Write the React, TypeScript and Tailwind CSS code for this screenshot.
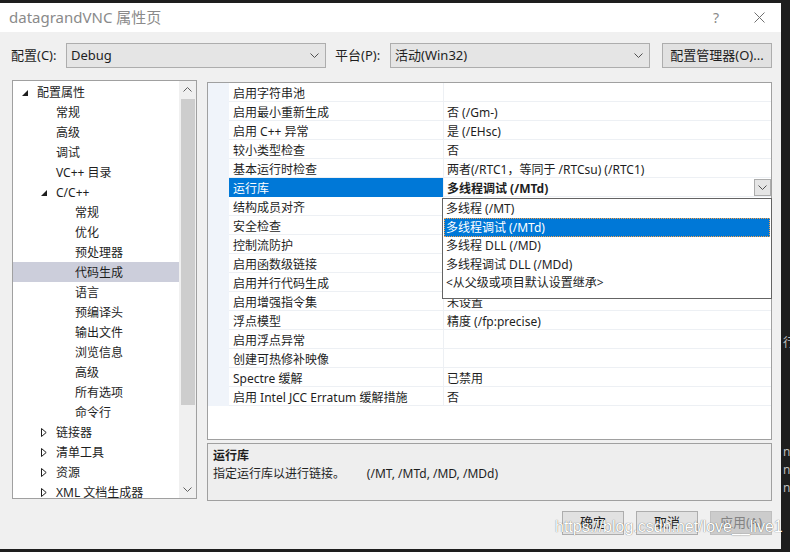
import React from 'react';

type TreeItem = { label: string; level: number; arrow?: 'open' | 'closed'; selected?: boolean };

const tree: TreeItem[] = [
  { label: '配置属性', level: 0, arrow: 'open' },
  { label: '常规', level: 1 },
  { label: '高级', level: 1 },
  { label: '调试', level: 1 },
  { label: 'VC++ 目录', level: 1 },
  { label: 'C/C++', level: 1, arrow: 'open' },
  { label: '常规', level: 2 },
  { label: '优化', level: 2 },
  { label: '预处理器', level: 2 },
  { label: '代码生成', level: 2, selected: true },
  { label: '语言', level: 2 },
  { label: '预编译头', level: 2 },
  { label: '输出文件', level: 2 },
  { label: '浏览信息', level: 2 },
  { label: '高级', level: 2 },
  { label: '所有选项', level: 2 },
  { label: '命令行', level: 2 },
  { label: '链接器', level: 1, arrow: 'closed' },
  { label: '清单工具', level: 1, arrow: 'closed' },
  { label: '资源', level: 1, arrow: 'closed' },
  { label: 'XML 文档生成器', level: 1, arrow: 'closed' },
];

const indent = ['w-[8px]', 'w-[27px]', 'w-[46px]'];

const props: [string, string][] = [
  ['启用字符串池', ''],
  ['启用最小重新生成', '否 (/Gm-)'],
  ['启用 C++ 异常', '是 (/EHsc)'],
  ['较小类型检查', '否'],
  ['基本运行时检查', '两者(/RTC1，等同于 /RTCsu) (/RTC1)'],
  ['运行库', '多线程调试 (/MTd)'],
  ['结构成员对齐', '默认设置'],
  ['安全检查', '启用安全检查 (/GS)'],
  ['控制流防护', ''],
  ['启用函数级链接', ''],
  ['启用并行代码生成', ''],
  ['启用增强指令集', '未设置'],
  ['浮点模型', '精度 (/fp:precise)'],
  ['启用浮点异常', ''],
  ['创建可热修补映像', ''],
  ['Spectre 缓解', '已禁用'],
  ['启用 Intel JCC Erratum 缓解措施', '否'],
];

const options = [
  { label: '多线程 (/MT)', h: 'h-[18px]' },
  { label: '多线程调试 (/MTd)', h: 'h-[19px]', selected: true },
  { label: '多线程 DLL (/MD)', h: 'h-[18px]' },
  { label: '多线程调试 DLL (/MDd)', h: 'h-[19px]' },
  { label: '<从父级或项目默认设置继承>', h: 'h-[18px]' },
];

const Chevron = ({ className = '' }: { className?: string }) => (
  <svg width="9" height="5" viewBox="0 0 9 5" className={className}>
    <path d="M0.5 0.5 L4.5 4.5 L8.5 0.5" fill="none" stroke="currentColor" strokeWidth="1" />
  </svg>
);

const Arrow = ({ kind }: { kind: 'open' | 'closed' }) =>
  kind === 'open' ? (
    <svg width="6" height="6" viewBox="0 0 6 6">
      <path d="M6 0 L6 6 L0 6 Z" fill="#1e1e1e" />
    </svg>
  ) : (
    <svg width="6" height="9" viewBox="0 0 6 9">
      <path d="M0.5 0.5 L5.2 4.5 L0.5 8.5 Z" fill="none" stroke="#1e1e1e" strokeWidth="1" />
    </svg>
  );

const Select = ({ value }: { value: string }) => (
  <div className="w-[260px] h-[25px] bg-[#e5e5e5] border border-[#adadad] flex items-center pl-[4px] pr-[6px]">
    <span className="flex-1 text-[13px]">{value}</span>
    <Chevron className="text-[#505050]" />
  </div>
);

const Button = ({ label, disabled }: { label: string; disabled?: boolean }) => (
  <div
    className={
      disabled
        ? 'w-[62px] h-[24px] bg-[#cccccc] border border-[#bfbfbf] text-[#838383] flex items-center justify-center'
        : 'w-[62px] h-[24px] bg-[#e1e1e1] border border-[#adadad] flex items-center justify-center'
    }
  >
    {label}
  </div>
);

// bits of the editor window that show behind the dialog
const behind = [
  { y: 'mt-[336px]', t: '行' },
  { y: 'mt-[95px]', t: 'n' },
  { y: 'mt-[4px]', t: 'n' },
  { y: 'mt-[4px]', t: 'n' },
];

export default function App() {
  return (
    <div className="w-[790px] h-[552px] bg-[#1e1e1e] overflow-hidden flex font-['Noto_Sans','Noto_Sans_CJK_SC',sans-serif] text-[12px] text-[#1e1e1e]">
      <div className="relative mt-[3px] w-[781px] h-[546px] bg-[#f0f0f0] flex flex-col">
        {/* title bar */}
        <div className="h-[29px] bg-white flex items-center pl-[9px] pr-[16px]">
          <span className="flex-1 text-[15px] text-[#8a8a8a]">datagrandVNC 属性页</span>
          <span className="text-[14px] text-[#8a8a8a] mr-[35px]">?</span>
          <svg width="11" height="11" viewBox="0 0 11 11">
            <path d="M0.5 0.5 L10.5 10.5 M10.5 0.5 L0.5 10.5" stroke="#707070" strokeWidth="1" />
          </svg>
        </div>

        {/* config row */}
        <div className="mt-[11px] h-[25px] flex items-center pl-[11px]">
          <span className="w-[55px] text-[13px]">配置(C):</span>
          <Select value="Debug" />
          <span className="w-[55px] ml-[9px] text-[13px]">平台(P):</span>
          <Select value="活动(Win32)" />
          <div className="ml-[12px] w-[110px] h-[25px] bg-[#e1e1e1] border border-[#adadad] flex items-center justify-center text-[13px]">
            配置管理器(O)...
          </div>
        </div>

        {/* main */}
        <div className="mt-[12px] flex">
          {/* tree */}
          <div className="ml-[12px] w-[185px] h-[419px] border border-[#a0a0a0] bg-white flex overflow-hidden">
            <div className="flex-1 pt-[1px]">
              {tree.map((t, i) => (
                <div
                  key={i}
                  className={
                    t.selected
                      ? 'h-[20px] flex items-center bg-[#cccedb] leading-[20px] pt-[1px]'
                      : 'h-[20px] flex items-center leading-[20px] pt-[1px]'
                  }
                >
                  <div className={indent[t.level]} />
                  <div className="w-[16px] flex items-center pl-[1px]">{t.arrow && <Arrow kind={t.arrow} />}</div>
                  <span className="whitespace-nowrap">{t.label}</span>
                </div>
              ))}
            </div>
            <div className="w-[17px] bg-[#f0f0f0] flex flex-col items-center">
              <div className="h-[17px] flex items-center justify-center">
                <Chevron className="rotate-180 text-[#606060]" />
              </div>
              <div className="mt-[1px] w-[14px] h-[306px] bg-[#cdcdcd]" />
              <div className="flex-1" />
              <div className="h-[17px] flex items-center justify-center">
                <Chevron className="text-[#606060]" />
              </div>
            </div>
          </div>

          {/* right */}
          <div className="ml-[10px] w-[565px] flex flex-col">
            <div className="relative mt-[2px] h-[358px] border border-[#a0a0a0] bg-white">
              {props.map(([name, value], i) => {
                const sel = name === '运行库';
                return (
                  <div key={i} className="h-[19px] flex leading-[19px]">
                    <div className="w-[21px] bg-[#f0f4fa]" />
                    <div
                      className={
                        sel
                          ? 'w-[214px] bg-[#0078d7] text-white pl-[4px] pt-[1px] border-b border-[#0078d7] whitespace-nowrap'
                          : 'w-[214px] pl-[4px] pt-[1px] border-b border-[#edf0f4] whitespace-nowrap'
                      }
                    >
                      {name}
                    </div>
                    <div className="flex-1 flex border-l border-b border-[#edf0f4] pl-[3px] whitespace-nowrap">
                      <span className={sel ? 'flex-1 font-bold pt-[1px]' : 'flex-1 pt-[1px]'}>{value}</span>
                      {sel && (
                        <div className="mt-[1px] w-[17px] h-[17px] bg-[#e5e5e5] border border-[#acacac] flex items-center justify-center text-[#505050]">
                          <Chevron />
                        </div>
                      )}
                    </div>
                  </div>
                );
              })}

              {/* dropdown list */}
              <div className="absolute left-[234px] top-[115px] w-[330px] h-[101px] bg-white border border-[#646464] pt-[1px] px-[1px]">
                {options.map((o, i) => (
                  <div
                    key={i}
                    className={
                      o.selected
                        ? `${o.h} flex items-center pl-[1px] bg-[#0078d7] text-white border border-dotted border-[#f5a04a]`
                        : `${o.h} flex items-center pl-[2px]`
                    }
                  >
                    {o.label}
                  </div>
                ))}
              </div>
            </div>

            {/* description */}
            <div className="mt-[3px] h-[58px] border border-[#a0a0a0] bg-[#eeeeee] px-[5px] pt-[3px] leading-[18px]">
              <div className="font-bold">运行库</div>
              <div className="whitespace-pre">指定运行库以进行链接。       (/MT, /MTd, /MD, /MDd)</div>
            </div>
          </div>
        </div>

        {/* buttons */}
        <div className="mt-[10px] flex justify-end pr-[9px] text-[13px]">
          <Button label="确定" />
          <div className="w-[12px]" />
          <Button label="取消" />
          <div className="w-[12px]" />
          <Button label="应用(A)" disabled />
        </div>

        {/* watermark */}
        <div className="absolute left-[555px] top-[514px] text-[16px] leading-[20px] text-white font-['Liberation_Sans',sans-serif] [text-shadow:0_0_1px_rgba(0,0,0,0.7)] whitespace-nowrap">
          https://blog.csdn.net/love__live1
        </div>
      </div>

      {/* strip of the window behind */}
      <div className="flex-1 flex flex-col pl-[2px] text-[#bdbdbd] text-[12px] leading-[14px] overflow-hidden">
        {behind.map((b, i) => (
          <span key={i} className={b.y}>
            {b.t}
          </span>
        ))}
      </div>
    </div>
  );
}
